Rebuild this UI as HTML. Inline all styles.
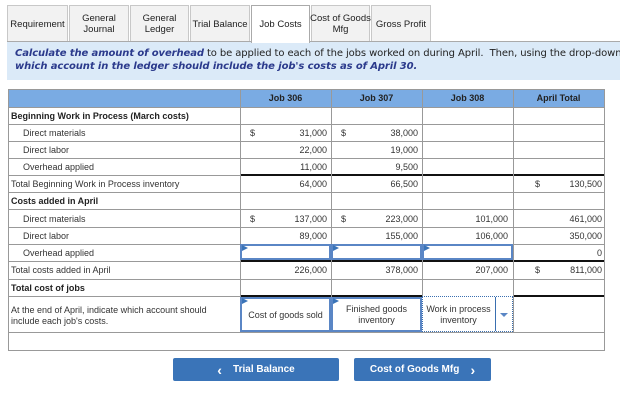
<!DOCTYPE html>
<html><head><meta charset="utf-8"><style>
*{margin:0;padding:0;box-sizing:border-box}
body{width:620px;height:407px;background:#fff;font-family:"Liberation Sans",Arial,sans-serif;position:relative;overflow:hidden;color:#222}
.tab{position:absolute;top:5px;height:37px;background:#f2f2f2;border:1px solid #c8c8c8;border-bottom:none;font-size:9.5px;font-family:"Liberation Sans",sans-serif;display:flex;align-items:center;justify-content:center;text-align:center;line-height:11px;color:#222;white-space:nowrap}
.tab.act{background:#fff;height:38px;border-color:#aaa;z-index:2}
.bar{position:absolute;left:7px;top:41px;width:613px;border-top:1px solid #aaa}
.ins{position:absolute;left:7px;top:42px;width:613px;height:38px;background:#dbeaf8;font-family:"DejaVu Sans",sans-serif;font-size:10px;line-height:13px;padding:5px 0 0 8px;color:#222;white-space:nowrap;overflow:hidden;letter-spacing:-0.1px}
.ins b{color:#2b3a8c;font-style:italic}
.c{position:absolute;font-size:9px;color:#333;white-space:nowrap}
.hl{position:absolute;background:#999;height:1px}
.vl{position:absolute;background:#999;width:1px}
.bl{position:absolute;background:#111;height:2px}
.in{position:absolute;border:2px solid #5a86c5;background:#fff}
.in:before{content:"";position:absolute;left:0;top:0;border-left:6px solid #3a74b8;border-top:3px solid transparent;border-bottom:3px solid transparent;top:-1px}
.btn{position:absolute;top:358px;height:23px;background:#3a74b8;color:#fff;font-weight:bold;font-size:10px;display:flex;align-items:center;justify-content:center;border-radius:2px}
.btn span{font-size:14px;line-height:10px}
</style></head><body>
<div class="tab" style="left:7px;width:61px">Requirement</div>
<div class="tab" style="left:69px;width:60px">General<br>Journal</div>
<div class="tab" style="left:130px;width:59px">General<br>Ledger</div>
<div class="tab" style="left:190px;width:60px">Trial Balance</div>
<div class="tab act" style="left:251px;width:59px">Job Costs</div>
<div class="tab" style="left:311px;width:59px">Cost of Goods<br>Mfg</div>
<div class="tab" style="left:371px;width:60px">Gross Profit</div>
<div class="bar"></div>
<div class="ins"><b>Calculate the amount of overhead</b> to be applied to each of the jobs worked on during April.&nbsp; Then, using the drop-down<br><b>which account in the ledger should include the job's costs as of April 30.</b></div>

<div style="position:absolute;left:8px;top:89px;width:596px;height:18px;background:#7aabe3"></div>
<div class="c" style="left:240px;width:91px;top:93px;text-align:center;font-weight:bold;color:#222">Job 306</div>
<div class="c" style="left:331px;width:91px;top:93px;text-align:center;font-weight:bold;color:#222">Job 307</div>
<div class="c" style="left:422px;width:91px;top:93px;text-align:center;font-weight:bold;color:#222">Job 308</div>
<div class="c" style="left:513px;width:91px;top:93px;text-align:center;font-weight:bold;color:#222">April Total</div>

<div class="hl" style="left:8px;width:597px;top:89px"></div>
<div class="hl" style="left:8px;width:597px;top:107px"></div>
<div class="hl" style="left:8px;width:597px;top:124px"></div>
<div class="hl" style="left:8px;width:597px;top:141px"></div>
<div class="hl" style="left:8px;width:597px;top:158px"></div>
<div class="hl" style="left:8px;width:597px;top:175px"></div>
<div class="hl" style="left:8px;width:597px;top:192px"></div>
<div class="hl" style="left:8px;width:597px;top:209px"></div>
<div class="hl" style="left:8px;width:597px;top:227px"></div>
<div class="hl" style="left:8px;width:597px;top:244px"></div>
<div class="hl" style="left:8px;width:597px;top:261px"></div>
<div class="hl" style="left:8px;width:597px;top:279px"></div>
<div class="hl" style="left:8px;width:597px;top:296px"></div>
<div class="hl" style="left:8px;width:597px;top:332px"></div>
<div class="hl" style="left:8px;width:597px;top:350px"></div>
<div class="bl" style="left:240px;width:364px;top:174px"></div>
<div class="bl" style="left:240px;width:364px;top:260px"></div>
<div class="bl" style="left:240px;width:182px;top:295px"></div>
<div class="bl" style="left:513px;width:91px;top:295px"></div>
<div class="vl" style="left:8px;top:89px;height:262px"></div>
<div class="vl" style="left:240px;top:89px;height:243px"></div>
<div class="vl" style="left:331px;top:89px;height:243px"></div>
<div class="vl" style="left:422px;top:89px;height:243px"></div>
<div class="vl" style="left:513px;top:89px;height:243px"></div>
<div class="vl" style="left:604px;top:89px;height:262px"></div>

<div class="c" style="left:11px;top:111px;font-weight:bold;color:#222">Beginning Work in Process (March costs)</div>
<div class="c" style="left:23px;top:128px">Direct materials</div>
<div class="c" style="left:23px;top:145px">Direct labor</div>
<div class="c" style="left:23px;top:162px">Overhead applied</div>
<div class="c" style="left:11px;top:179px">Total Beginning Work in Process inventory</div>
<div class="c" style="left:11px;top:196px;font-weight:bold;color:#222">Costs added in April</div>
<div class="c" style="left:23px;top:214px">Direct materials</div>
<div class="c" style="left:23px;top:231px">Direct labor</div>
<div class="c" style="left:23px;top:248px">Overhead applied</div>
<div class="c" style="left:11px;top:265px">Total costs added in April</div>
<div class="c" style="left:11px;top:283px;font-weight:bold;color:#222">Total cost of jobs</div>
<div class="c" style="left:11px;top:305px;line-height:11px">At the end of April, indicate which account should<br>include each job's costs.</div>

<div class="c" style="left:250px;top:128px">$</div><div class="c" style="left:250px;width:77px;top:128px;text-align:right">31,000</div>
<div class="c" style="left:341px;top:128px">$</div><div class="c" style="left:341px;width:77px;top:128px;text-align:right">38,000</div>
<div class="c" style="left:250px;width:77px;top:145px;text-align:right">22,000</div>
<div class="c" style="left:341px;width:77px;top:145px;text-align:right">19,000</div>
<div class="c" style="left:250px;width:77px;top:162px;text-align:right">11,000</div>
<div class="c" style="left:341px;width:77px;top:162px;text-align:right">9,500</div>
<div class="c" style="left:250px;width:77px;top:179px;text-align:right">64,000</div>
<div class="c" style="left:341px;width:77px;top:179px;text-align:right">66,500</div>
<div class="c" style="left:535px;top:179px">$</div><div class="c" style="left:520px;width:82px;top:179px;text-align:right">130,500</div>

<div class="c" style="left:250px;top:214px">$</div><div class="c" style="left:250px;width:77px;top:214px;text-align:right">137,000</div>
<div class="c" style="left:341px;top:214px">$</div><div class="c" style="left:341px;width:77px;top:214px;text-align:right">223,000</div>
<div class="c" style="left:430px;width:78px;top:214px;text-align:right">101,000</div>
<div class="c" style="left:520px;width:82px;top:214px;text-align:right">461,000</div>
<div class="c" style="left:250px;width:77px;top:231px;text-align:right">89,000</div>
<div class="c" style="left:341px;width:77px;top:231px;text-align:right">155,000</div>
<div class="c" style="left:430px;width:78px;top:231px;text-align:right">106,000</div>
<div class="c" style="left:520px;width:82px;top:231px;text-align:right">350,000</div>
<div class="in" style="left:240px;top:244px;width:91px;height:16px"></div>
<div class="in" style="left:331px;top:244px;width:91px;height:16px"></div>
<div class="in" style="left:422px;top:244px;width:91px;height:16px"></div>
<div class="c" style="left:520px;width:82px;top:248px;text-align:right">0</div>
<div class="c" style="left:250px;width:77px;top:265px;text-align:right">226,000</div>
<div class="c" style="left:341px;width:77px;top:265px;text-align:right">378,000</div>
<div class="c" style="left:430px;width:78px;top:265px;text-align:right">207,000</div>
<div class="c" style="left:535px;top:265px">$</div><div class="c" style="left:520px;width:82px;top:265px;text-align:right">811,000</div>

<div class="in" style="left:240px;top:297px;width:91px;height:35px"></div>
<div class="c" style="left:240px;width:91px;top:310px;text-align:center">Cost of goods sold</div>
<div class="in" style="left:331px;top:297px;width:91px;height:35px"></div>
<div class="c" style="left:331px;width:91px;top:304px;text-align:center;line-height:11px">Finished goods<br>inventory</div>
<div style="position:absolute;left:422px;top:296px;width:91px;height:36px;border:1px dotted #3a6fb0;background:#fff"></div>
<div style="position:absolute;left:495px;top:297px;width:1px;height:34px;background:#3a6fb0"></div>
<div style="position:absolute;left:500px;top:313px;border-top:4px solid #5a86c5;border-left:4px solid transparent;border-right:4px solid transparent"></div>
<div class="c" style="left:422px;width:73px;top:304px;text-align:center;line-height:11px">Work in process<br>inventory</div>

<div class="btn" style="left:173px;width:166px"><span>‹</span>&nbsp;&nbsp;&nbsp;&nbsp;Trial Balance</div>
<div class="btn" style="left:354px;width:137px">Cost of Goods Mfg&nbsp;&nbsp;&nbsp;&nbsp;<span>›</span></div>
</body></html>
